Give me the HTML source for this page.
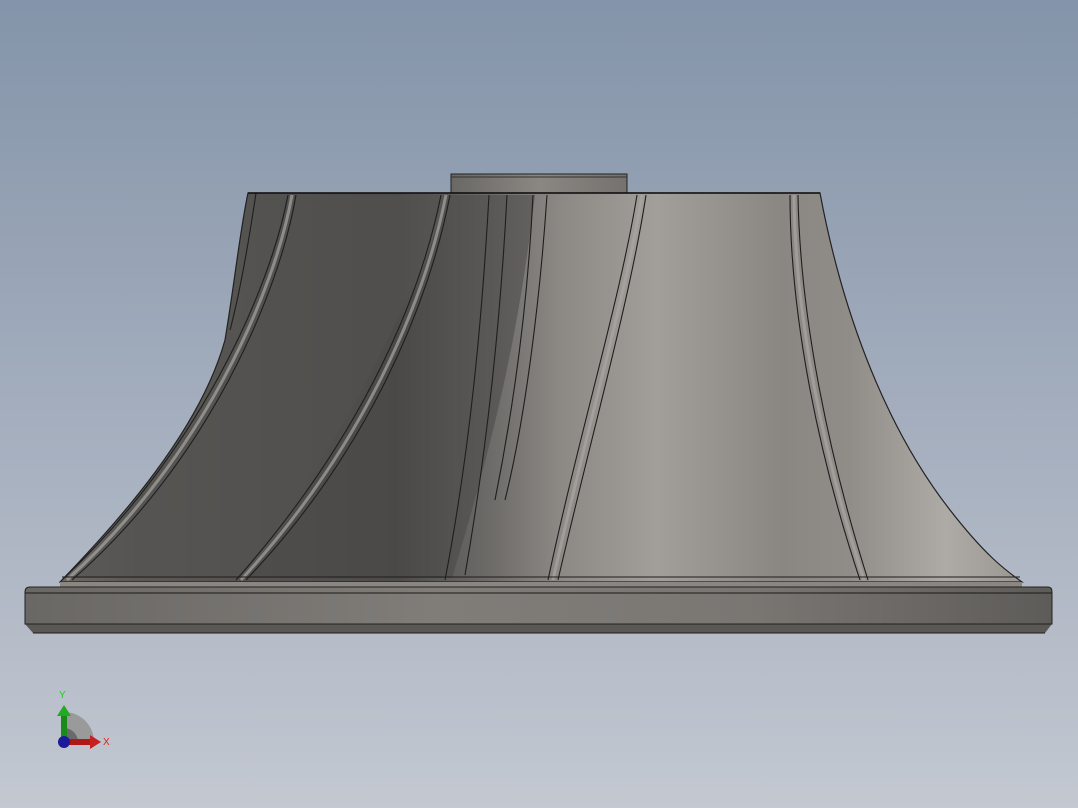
<!DOCTYPE html>
<html><head><meta charset="utf-8"><style>
html,body{margin:0;padding:0;width:1078px;height:808px;overflow:hidden}
svg{display:block}
</style></head><body>
<svg width="1078" height="808" viewBox="0 0 1078 808" xmlns="http://www.w3.org/2000/svg">
<defs>
<linearGradient id="bg" x1="0" y1="0" x2="0" y2="1">
<stop offset="0" stop-color="#8494a9"/><stop offset="0.5" stop-color="#a3adbd"/><stop offset="1" stop-color="#c3c8d1"/></linearGradient>
<linearGradient id="body" x1="0" y1="0" x2="1" y2="0">
<stop offset="0" stop-color="#6a6864"/><stop offset="0.08" stop-color="#5a5956"/><stop offset="0.35" stop-color="#4c4b49"/>
<stop offset="0.45" stop-color="#6e6c69"/><stop offset="0.52" stop-color="#8c8985"/><stop offset="0.62" stop-color="#a29f9b"/>
<stop offset="0.75" stop-color="#8a8783"/><stop offset="0.82" stop-color="#908d89"/><stop offset="0.92" stop-color="#aeaba7"/><stop offset="1" stop-color="#9a9793"/></linearGradient>
<linearGradient id="base" x1="0" y1="0" x2="1" y2="0">
<stop offset="0" stop-color="#6a6864"/><stop offset="0.4" stop-color="#807d79"/><stop offset="0.7" stop-color="#7a7773"/><stop offset="1" stop-color="#5e5c59"/></linearGradient>
<linearGradient id="hub" x1="0" y1="0" x2="1" y2="0">
<stop offset="0" stop-color="#6a6864"/><stop offset="0.5" stop-color="#8a8783"/><stop offset="1" stop-color="#75726e"/></linearGradient>
</defs>
<rect width="1078" height="808" fill="url(#bg)"/>
<rect x="451" y="174" width="176" height="19" fill="url(#hub)" stroke="#222" stroke-width="1"/>
<line x1="451" y1="177" x2="627" y2="177" stroke="#333"/>
<path d="M248,193 L820,193 C840,300 880,420 950,510 C985,555 1005,570 1022,582 L60,582 C120,520 200,430 225,340 C235,280 240,230 248,193 Z" fill="url(#body)" stroke="#222" stroke-width="1.2"/>
<path d="M292,195 L445,195 C420,280 360,420 240,578 L70,578 C150,490 220,400 250,320 C270,260 282,220 292,195Z" fill="#535250" opacity="0.6"/>
<path d="M445,195 L535,195 C520,320 500,420 452,578 L245,578 C360,430 420,300 445,195Z" fill="#4a4947" opacity="0.55"/>
<g fill="none" stroke="#a8a6a2" stroke-width="3" opacity="0.7">
<path d="M292,195 C275,290 205,455 67,580"/>
<path d="M446,195 C425,300 365,445 241,580"/>
<path d="M642,195 C625,300 585,435 553,580"/>
<path d="M794,195 C795,320 825,460 864,580"/>
</g>
<g fill="none" stroke="#1e1e1e" stroke-width="1.1">
<path d="M288,195 C270,290 200,450 62,580"/><path d="M296,195 C280,290 210,460 72,580"/>
<path d="M441,195 C420,300 360,440 236,580"/><path d="M450,195 C430,300 370,450 246,580"/>
<path d="M489,195 C482,320 470,450 445,580"/><path d="M507,195 C500,330 485,460 465,575"/>
<path d="M533,195 C528,300 515,400 495,500"/><path d="M547,195 C540,300 525,420 505,500"/>
<path d="M637,195 C620,300 580,430 548,580"/><path d="M646,195 C630,300 590,440 558,580"/>
<path d="M790,195 C790,320 820,460 860,580"/><path d="M798,195 C800,320 830,460 868,580"/>
<path d="M256,193 C246,260 238,300 230,330"/>
<path d="M62,577 L1020,577"/>
</g>
<line x1="248" y1="193" x2="820" y2="193" stroke="#111" stroke-width="1.5"/>
<path d="M60,582 L1022,582 L1022,587 L60,587Z" fill="#8a8783"/>
<path d="M25,624 L1052,624 L1045,633 L33,633 Z" fill="#5a5855"/>
<path d="M30,587 L1048,587 Q1052,587 1052,592 L1052,624 L25,624 L25,592 Q25,587 30,587Z" fill="url(#base)" stroke="#222" stroke-width="1"/>
<line x1="25" y1="593" x2="1052" y2="593" stroke="#1a1a1a"/>
<line x1="33" y1="633" x2="1045" y2="633" stroke="#1a1a1a"/>
<path d="M64,742 L64,712 A30,30 0 0 1 94,742 Z" fill="#9a9a9a"/>
<path d="M64,742 L64,728 A14,14 0 0 1 78,742 Z" fill="#6a6a6a"/>
<rect x="61" y="714" width="6" height="28" fill="#1a8a1a"/>
<polygon points="57,716 64,705 71,716" fill="#22aa22"/>
<rect x="64" y="739" width="28" height="6" fill="#b01818"/>
<polygon points="90,735 101,742 90,749" fill="#c82020"/>
<circle cx="64" cy="742" r="6" fill="#1a1a9a"/>
<text x="59" y="698" font-family="Liberation Sans,sans-serif" font-size="10" fill="#22cc22">Y</text>
<text x="103" y="745" font-family="Liberation Sans,sans-serif" font-size="10" fill="#dd2222">X</text>
</svg>
</body></html>
